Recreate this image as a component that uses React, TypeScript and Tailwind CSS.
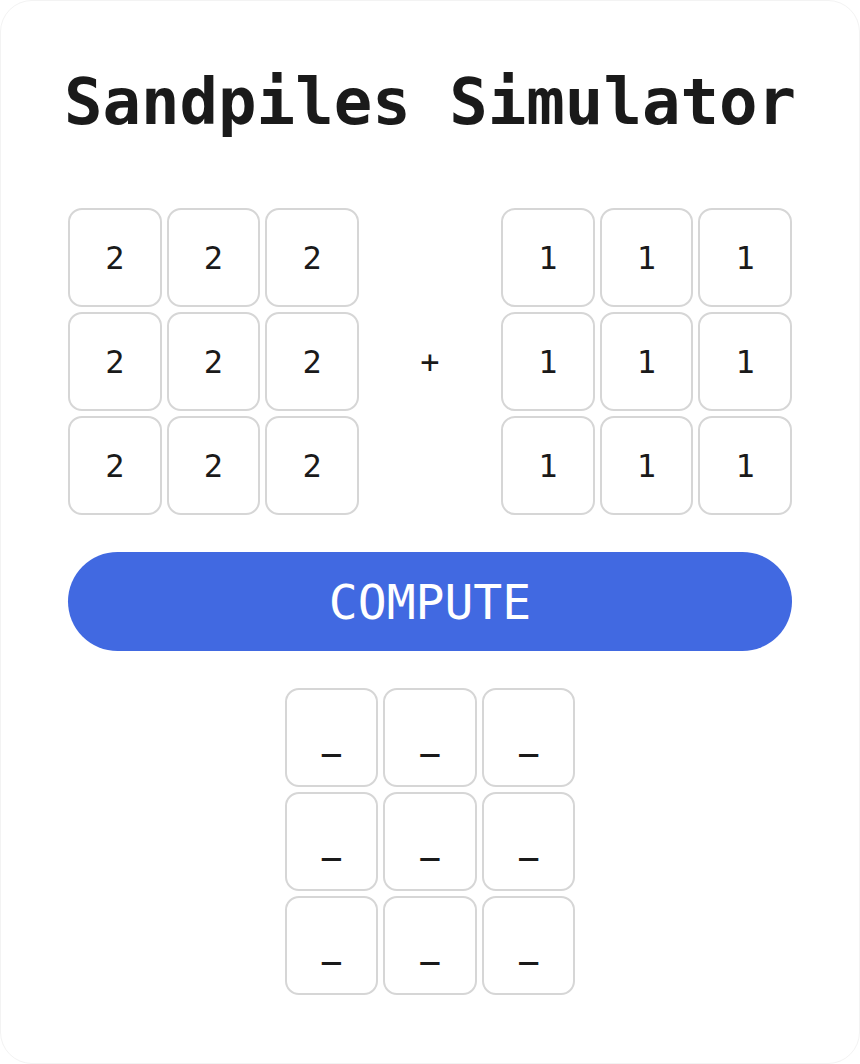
import React, { useState } from "react";

const mono = "font-['DejaVu_Sans_Mono',monospace]";

const Cell = ({ value, bold }: { value: string; bold?: boolean }) => (
  <div
    className={`h-[99px] rounded-[14px] border-2 border-[#d6d6d6] bg-white flex items-center justify-center text-[32px] text-[#1a1a1a] ${
      bold ? "font-bold" : ""
    }`}
  >
    {value}
  </div>
);

const Grid = ({ values, bold }: { values: string[]; bold?: boolean }) => (
  <div className="grid w-[291px] grid-cols-3 gap-[5px]">
    {values.map((v, i) => (
      <Cell key={i} value={v} bold={bold} />
    ))}
  </div>
);

const App = () => {
  const [a] = useState(Array(9).fill("2"));
  const [b] = useState(Array(9).fill("1"));
  const [result, setResult] = useState<string[]>(Array(9).fill("_"));

  const compute = () => {
    setResult(Array(9).fill("_"));
  };

  return (
    <div className={`${mono} h-[1064px] overflow-hidden bg-white`}>
      <div className="h-[1064px] rounded-[32px] border border-[#f3f3f3] bg-white px-[67px] pt-[53px]">
        <h1 className="-mx-8 whitespace-nowrap text-center text-[64px] font-bold text-[#1a1a1a]">
          Sandpiles Simulator
        </h1>
        <div className="mt-[58px] flex items-center justify-between">
          <Grid values={a} />
          <div className="text-[32px] text-[#1a1a1a]">+</div>
          <Grid values={b} />
        </div>
        <button
          type="button"
          onClick={compute}
          className="mt-[37px] flex h-[99px] w-full items-center justify-center rounded-full bg-[#4169e1] text-[48px] text-white"
        >
          COMPUTE
        </button>
        <div className="mt-[37px] flex justify-center">
          <Grid values={result} bold />
        </div>
      </div>
    </div>
  );
};

export default App;
